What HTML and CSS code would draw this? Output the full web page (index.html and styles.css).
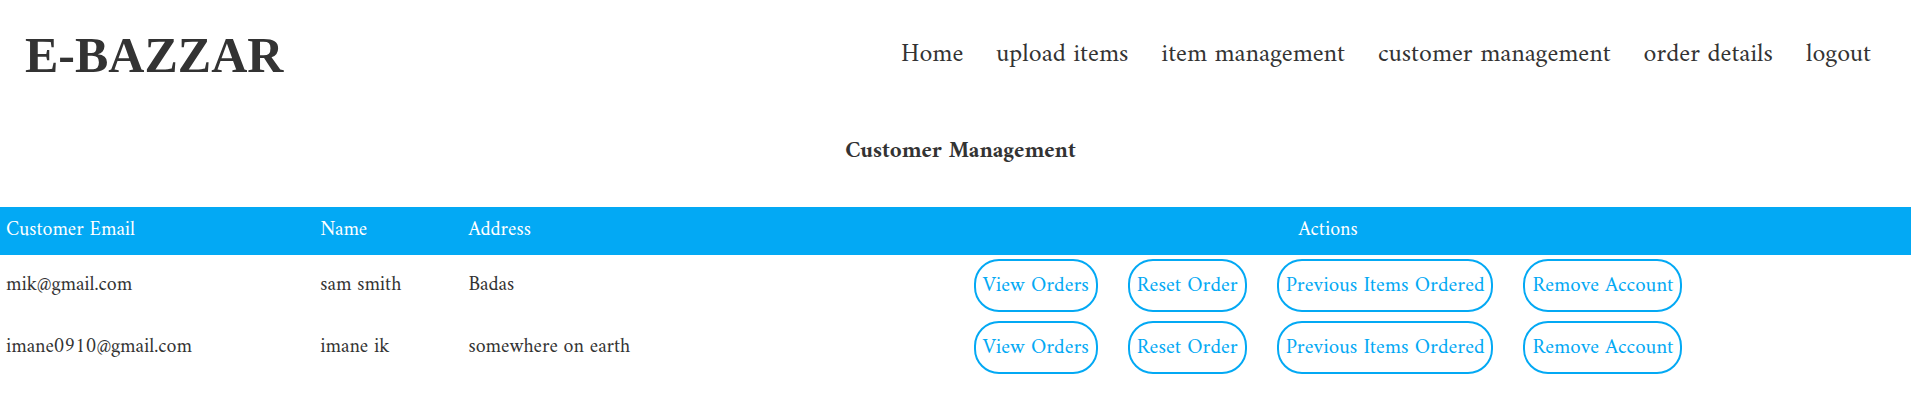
FILE: index.html
```html
<!DOCTYPE html>
<html lang="en">
<head>
<meta charset="utf-8">
<title>Customer Management</title>
<link rel="stylesheet" href="styles.css">
</head>
<body>
<header class="site-header">
  <h1 class="logo">E-BAZZAR</h1>
  <nav class="site-nav">
    <a href="#">Home</a>
    <a href="#">upload items</a>
    <a href="#">item management</a>
    <a href="#">customer management</a>
    <a href="#">order details</a>
    <a href="#">logout</a>
  </nav>
</header>
<main>
  <h2 class="page-title">Customer Management</h2>
  <table class="customers">
    <thead>
      <tr>
        <th class="col-email" scope="col">Customer Email</th>
        <th class="col-name" scope="col">Name</th>
        <th class="col-address" scope="col">Address</th>
        <th class="col-actions" scope="col">Actions</th>
      </tr>
    </thead>
    <tbody>
      <tr>
        <td>mik@gmail.com</td>
        <td>sam smith</td>
        <td>Badas</td>
        <td>
          <div class="actions">
            <button type="button">View Orders</button>
            <button type="button">Reset Order</button>
            <button type="button">Previous Items Ordered</button>
            <button type="button">Remove Account</button>
          </div>
        </td>
      </tr>
      <tr>
        <td>imane0910@gmail.com</td>
        <td>imane ik</td>
        <td>somewhere on earth</td>
        <td>
          <div class="actions">
            <button type="button">View Orders</button>
            <button type="button">Reset Order</button>
            <button type="button">Previous Items Ordered</button>
            <button type="button">Remove Account</button>
          </div>
        </td>
      </tr>
    </tbody>
  </table>
</main>
</body>
</html>
```
FILE: styles.css
```css
* {
  box-sizing: border-box;
}

body {
  margin: 0;
  background: #fff;
  color: #333;
  font-family: "Amiri", "Liberation Serif", serif;
  font-size: 20px;
}

.site-header {
  display: flex;
  justify-content: space-between;
  align-items: center;
  padding: 24px 40px 0 25px;
}

.logo {
  margin: 0;
  font-family: "Liberation Serif", serif;
  font-size: 50px;
  line-height: 62px;
}

.site-nav {
  display: flex;
  gap: 33px;
}

.site-nav a {
  color: inherit;
  font-size: 26px;
  line-height: 32px;
  text-decoration: none;
}

.page-title {
  margin: 52px 0 41px;
  padding-left: 10px;
  font-size: 23px;
  line-height: 28px;
  text-align: center;
}

.customers {
  width: 100%;
  border-collapse: collapse;
  table-layout: fixed;
}

.customers th {
  height: 48px;
  padding: 0 6px 2px;
  background: #03a9f4;
  color: #fff;
  font-weight: 400;
  text-align: left;
}

.customers .col-email {
  width: 16.45%;
}

.customers .col-name {
  width: 7.75%;
}

.customers .col-address {
  width: 14.8%;
}

.customers .col-actions {
  text-align: center;
}

.customers td {
  padding: 4px 6px 5px;
}

.actions {
  display: flex;
  justify-content: center;
  gap: 30px;
}

.actions button {
  height: 53px;
  padding: 0 7px;
  border: 2px solid #03a9f4;
  border-radius: 25px;
  background: #fff;
  color: #03a9f4;
  font-family: inherit;
  font-size: 21px;
  white-space: nowrap;
}
```
